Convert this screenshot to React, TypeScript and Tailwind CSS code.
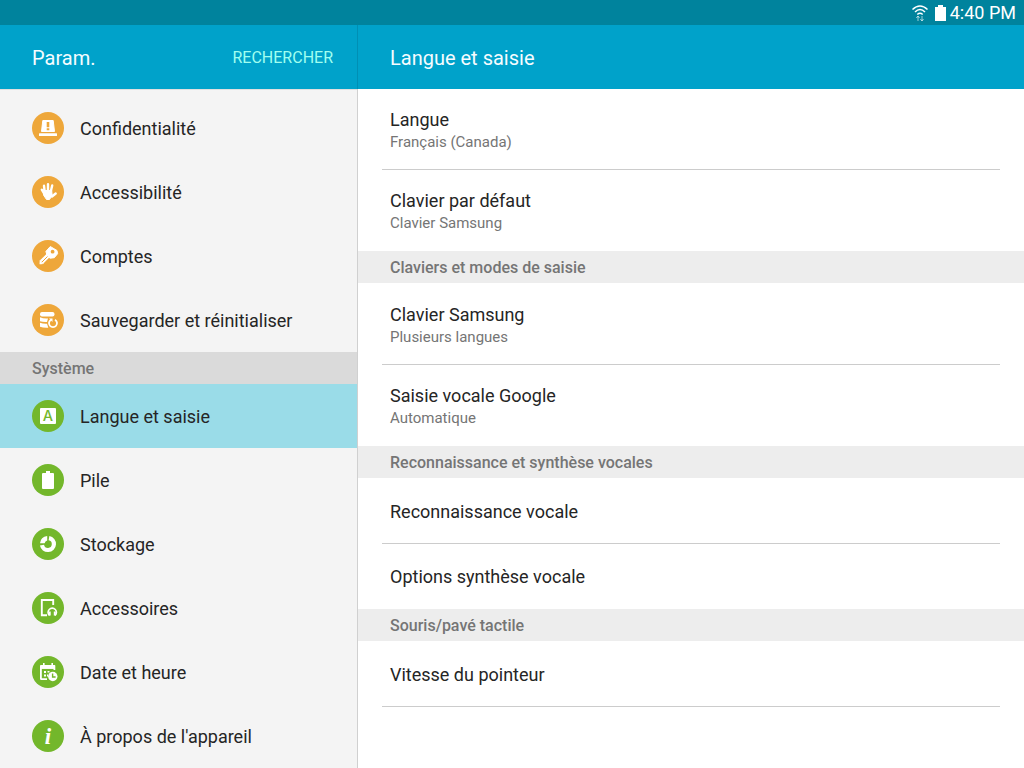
import { useState } from 'react';
import type { ReactNode } from 'react';

const ORANGE = 'text-[#eea73a]';
const GREEN = 'text-[#73b72b]';

// Glyphs are drawn in a 32x32 box, white on the coloured disc
const ICONS: Record<string, ReactNode> = {
  privacy: (
    <>
      <path d="M10.800 8.500h10.400l1.300 11H9.500z" strokeLinejoin="round" stroke="#fff" />
      <rect x="7" y="21.300" width="18" height="2.700" rx="0.500" />
      <path d="M14.700 10h2.600v5.200h-2.600zM14.700 16.200h2.600v2h-2.600z" fill="currentColor" />
    </>
  ),
  hand: (
    <g stroke="#fff" strokeLinecap="round" strokeLinejoin="round">
      <path d="M12.600 15l-.6-5.200M16 14V8.300M19 14.500l1.200-5M12.500 18l-2.700-4.300M20 20.500l3.700-3" strokeWidth="2.400" />
      <path d="M11.800 14.500h7.900l.5 5-2.700 4h-3l-2.700-4z" strokeWidth="1" />
    </g>
  ),
  key: (
    <>
      <path d="M18.300 6.500l6.700 4 .6 3.200-3.300 4-4.200.5-3-2.500-1.200-4.300z" strokeLinejoin="round" stroke="#fff" />
      <path d="M16.500 15.200l-6.500 6.500" stroke="#fff" strokeWidth="4.600" />
      <path d="M8 20l4 3-2 .9-2.200.2z" stroke="#fff" strokeWidth=".5" />
      <circle cx="20.600" cy="11.700" r="1.900" fill="currentColor" />
      <path d="M15.500 16.500l-5.700 5.700" stroke="currentColor" strokeWidth="1" />
    </>
  ),
  backup: (
    <>
      <rect x="8" y="8" width="14.500" height="4.500" rx="2" />
      <path d="M8 13.300q3 1.400 8 1.200l-1 3.500q-4.500.2-7-.8zM8 18.700q3 1.200 7 1l1.300 4q-5 .3-8.300-1z" />
      <path d="M19 15.700a4 4 0 1 0 4 0" fill="none" stroke="#fff" strokeWidth="1.800" />
      <path d="M17 14.500h3.500v3.500z" />
    </>
  ),
  language: (
    <>
      <rect x="8" y="8" width="16" height="16" rx="1" />
      <text x="16" y="21.400" textAnchor="middle" fontSize="14.500" fontWeight="500" fontFamily="Inter, sans-serif" fill="currentColor">A</text>
    </>
  ),
  battery: <path d="M14 7h4v2h3q1 0 1 1v14q0 1-1 1H11q-1 0-1-1V10q0-1 1-1h3z" />,
  storage: (
    <>
      <path d="M17 10.100a6 6 0 1 1-7 7" fill="none" stroke="#fff" strokeWidth="4.200" />
      <path d="M15.200 8v4.600a3.800 3.800 0 0 0-2.600 2.600H8A8.200 8.200 0 0 1 15.200 8z" />
    </>
  ),
  accessories: (
    <g fill="none" stroke="#fff">
      <path d="M21.200 13V8H9.800v15.200H15" strokeWidth="1.900" />
      <path d="M17.500 23.500a4.200 4.200 0 1 1 5.500 0" strokeWidth="1.600" />
      <path d="M17.700 19.500v4M22.800 19.500v4" strokeWidth="2" />
    </g>
  ),
  date: (
    <>
      <path d="M9.500 9H11V7h1.600v2h6.800V7H21v2h1.500q.8 0 .8.800V14H21.500v-1.200H9.800v9.500H15V24H9.300Q8 24 8 22.700V10.200Q8 9 9.500 9z" />
      <path d="M8 9.500h15v3.300H8zM12 15h2v2h-2zM15.500 15h2v1.500h-2zM12 18.500h2v2h-2zM15 18.500h1v2h-1z" />
      <circle cx="20.800" cy="20.500" r="4.700" />
      <path d="M20.600 17.500V21h3" fill="none" stroke="currentColor" strokeWidth="1.400" />
    </>
  ),
  about: (
    <text x="16" y="23.500" textAnchor="middle" fontSize="23" fontWeight="700" fontStyle="italic" fontFamily="Liberation Serif, serif">i</text>
  ),
};

const MENU = [
  {
    title: '', color: ORANGE, items: [
      { icon: 'privacy', label: 'Confidentialité' },
      { icon: 'hand', label: 'Accessibilité' },
      { icon: 'key', label: 'Comptes' },
      { icon: 'backup', label: 'Sauvegarder et réinitialiser' },
    ],
  },
  {
    title: 'Système', color: GREEN, items: [
      { icon: 'language', label: 'Langue et saisie' },
      { icon: 'battery', label: 'Pile' },
      { icon: 'storage', label: 'Stockage' },
      { icon: 'accessories', label: 'Accessoires' },
      { icon: 'date', label: 'Date et heure' },
      { icon: 'about', label: "À propos de l'appareil" },
    ],
  },
];

const SECTIONS: { title: string; rows: { label: string; value?: string }[] }[] = [
  { title: '', rows: [{ label: 'Langue', value: 'Français (Canada)' }, { label: 'Clavier par défaut', value: 'Clavier Samsung' }] },
  { title: 'Claviers et modes de saisie', rows: [{ label: 'Clavier Samsung', value: 'Plusieurs langues' }, { label: 'Saisie vocale Google', value: 'Automatique' }] },
  { title: 'Reconnaissance et synthèse vocales', rows: [{ label: 'Reconnaissance vocale' }, { label: 'Options synthèse vocale' }] },
  { title: 'Souris/pavé tactile', rows: [{ label: 'Vitesse du pointeur' }] },
];

function StatusBar() {
  return (
    <div className="flex h-[25px] items-center justify-end bg-[#00839d] pr-2 text-white">
      <svg width="18" height="18" viewBox="0 0 18 18" fill="none" stroke="currentColor" className="mr-1.5">
        <path d="M1.500 5.500Q9-1.500 16.500 5.500M4 8Q9 3 14 8M6.300 10.500Q9 8 11.700 10.500" strokeWidth="1.500" />
        <path d="M7 17v-5M5.300 14L7 12l1.500 2M11 12v5M9.300 15l1.700 2 1.500-2" strokeWidth="1" opacity=".6" />
      </svg>
      <svg width="11" height="16" viewBox="0 0 11 16" fill="currentColor" className="mr-1">
        <path d="M3 0h5v2h3v14H0V2h3z" />
      </svg>
      <span className="text-lg leading-6">4:40 PM</span>
    </div>
  );
}

function SectionTitle({ children, className }: { children: ReactNode; className: string }) {
  return <h2 className={`h-8 px-8 text-base leading-[34px] font-medium text-[#757575] ${className}`}>{children}</h2>;
}

export default function App() {
  const [active, setActive] = useState('language');

  return (
    <div className="flex min-h-screen flex-col bg-white font-['Roboto',sans-serif] text-[#252525]">
      <StatusBar />
      <div className="flex flex-1">
        {/* Menu */}
        <aside className="flex w-[358px] shrink-0 flex-col border-r border-[#d0d0d0] bg-[#f4f4f4]">
          <header className="-mr-px flex h-16 items-center justify-between border-r border-[#008fb4] bg-[#00a2ca] pt-0.5 pr-6 pl-8">
            <h1 className="text-xl text-[#f5fcff]">Param.</h1>
            <button className="text-base text-[#a0fff0]">RECHERCHER</button>
          </header>
          <nav className="border-t border-[#e0e0e0] pt-1.5">
            {MENU.map(g => (
              <div key={g.title}>
                {g.title && <SectionTitle className="bg-[#dadada]">{g.title}</SectionTitle>}
                {g.items.map(i => (
                  <button key={i.icon} onClick={() => setActive(i.icon)}
                    className={`flex h-16 w-full items-center gap-4 px-8 text-left text-lg ${active === i.icon ? 'bg-[#9adce8]' : ''}`}>
                    <svg width="32" height="32" viewBox="0 0 32 32" fill="#fff" className={g.color}>
                      <circle cx="16" cy="16" r="16" fill="currentColor" />
                      {ICONS[i.icon]}
                    </svg>
                    <span className="pt-0.5">{i.label}</span>
                  </button>
                ))}
              </div>
            ))}
          </nav>
        </aside>

        {/* Details */}
        <main className="min-w-0 flex-1">
          <header className="flex h-16 items-center bg-[#00a2ca] px-8 pt-0.5">
            <h1 className="text-xl text-[#f5fcff]">Langue et saisie</h1>
          </header>
          {SECTIONS.map(s => (
            <section key={s.title}>
              {s.title && <SectionTitle className="bg-[#ededed]">{s.title}</SectionTitle>}
              <div className={`px-6 ${s.title ? 'pt-px' : ''}`}>
                {s.rows.map((r, n) => (
                  <button key={r.label}
                    className={`flex w-full flex-col justify-center border-b px-2 pt-0.5 text-left ${r.value ? 'h-[81px]' : 'h-[65px]'} ${n === 0 ? 'border-[#cccccc]' : 'border-transparent'}`}>
                    <span className="text-lg leading-6">{r.label}</span>
                    {r.value && <span className="text-[15px] leading-5 text-[#757575]">{r.value}</span>}
                  </button>
                ))}
              </div>
            </section>
          ))}
        </main>
      </div>
    </div>
  );
}
